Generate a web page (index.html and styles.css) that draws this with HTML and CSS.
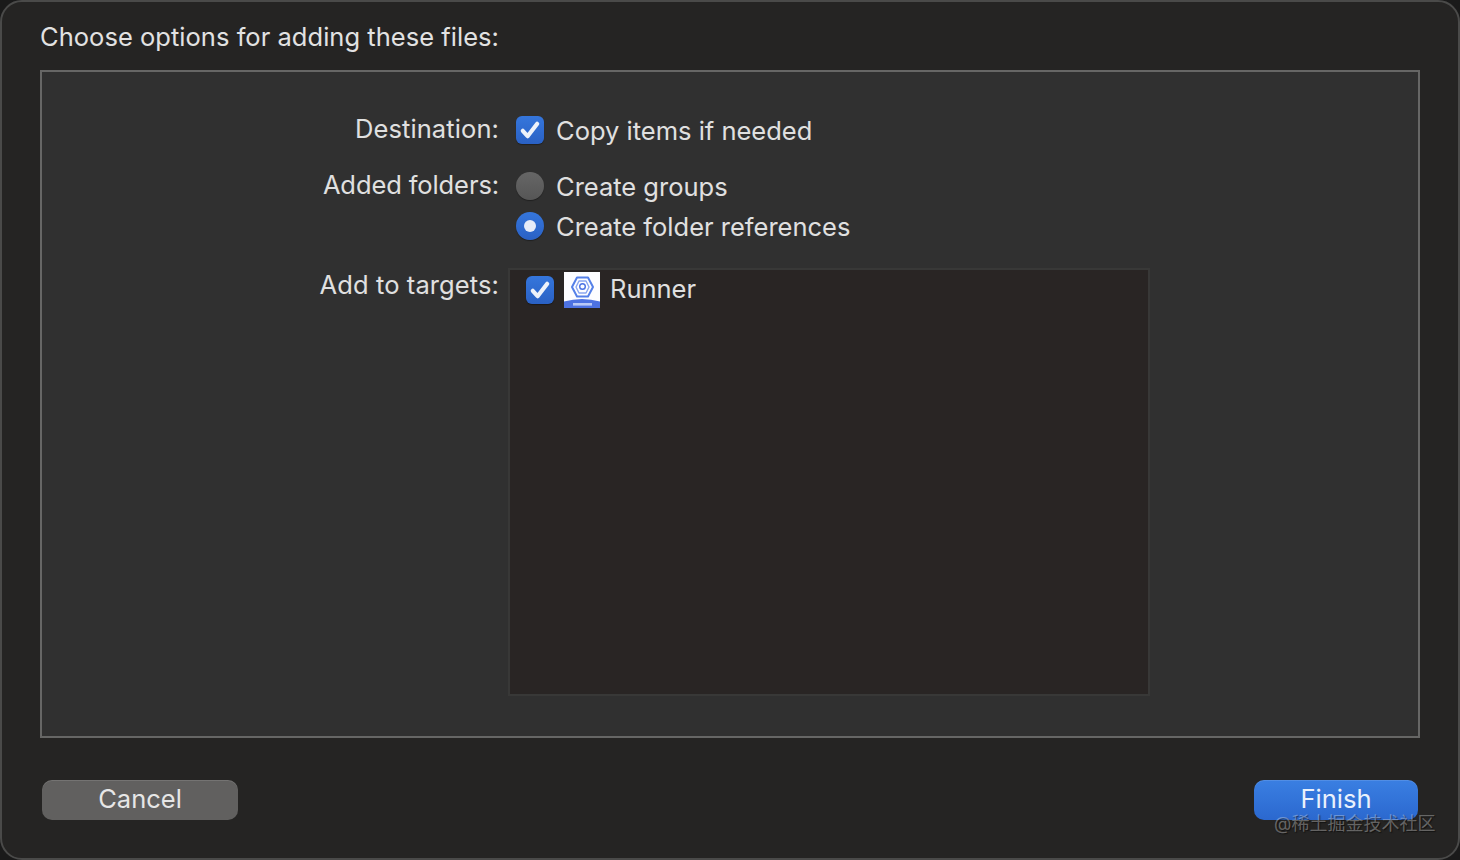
FILE: index.html
```html
<!DOCTYPE html>
<html lang="en">
<head>
<meta charset="utf-8">
<title>Choose options</title>
<link rel="stylesheet" href="styles.css">
</head>
<body>
<div class="sheet">
  <h1 class="title">Choose options for adding these files:</h1>
  <section class="panel">
    <div class="form">
      <div class="label">Destination:</div>
      <div class="option option-dest">
        <span class="check"><svg viewBox="0 0 28 28" class="tick"><path d="M6.8 14.8 L11.6 20.2 L21.2 7.8" /></svg></span>
        <span class="text">Copy items if needed</span>
      </div>
      <div class="label label-folders">Added folders:</div>
      <div class="radios">
        <div class="option">
          <span class="radio"></span>
          <span class="text">Create groups</span>
        </div>
        <div class="option">
          <span class="radio radio-on"><span class="dot"></span></span>
          <span class="text">Create folder references</span>
        </div>
      </div>
      <div class="label">Add to targets:</div>
      <div class="targets">
        <div class="target">
          <span class="check"><svg viewBox="0 0 28 28" class="tick"><path d="M6.8 14.8 L11.6 20.2 L21.2 7.8" /></svg></span>
          <svg class="appicon" viewBox="0 0 36 36">
            <rect width="36" height="36" fill="#fdfdff"/>
            <path d="M0 29.5 Q18 24.5 36 29.5 V36 H0 Z" fill="#4d72e2"/>
            <path d="M13 5.5 H24 L29 15 L24 24.5 H13 L8 15 Z" fill="none" stroke="#5580e8" stroke-width="2" stroke-linejoin="round"/>
            <path d="M15 9 H22 L25 15 L22 21 H15 L12 15 Z" fill="none" stroke="#8aa6f0" stroke-width="1.4" stroke-linejoin="round"/>
            <circle cx="18.5" cy="14.5" r="2.8" fill="none" stroke="#4a72e4" stroke-width="1.4"/>
            <rect x="9" y="31" width="19" height="2.6" fill="#b9c9f6"/>
          </svg>
          <span class="text">Runner</span>
        </div>
      </div>
    </div>
  </section>
  <footer class="actions">
    <button class="btn btn-cancel">Cancel</button>
    <button class="btn btn-finish">Finish</button>
  </footer>
  <div class="watermark">@稀土掘金技术社区</div>
</div>
</body>
</html>
```

FILE: styles.css
```css
* { box-sizing: border-box; }
html, body { margin: 0; padding: 0; background: #1a1a1a; }
body { width: 1460px; height: 860px; overflow: hidden; font-family: Inter, "Noto Sans CJK SC", sans-serif; }
.sheet {
  position: relative;
  width: 1460px;
  height: 860px;
  background: #252423;
  border: 2px solid #4a4a49;
  border-radius: 22px;
  padding: 0 38px;
  color: #e0e0e0;
}
.title {
  margin: 0;
  height: 68px;
  padding-top: 19px;
  font-size: 25.5px;
  letter-spacing: .03px;
  line-height: 32px;
  font-weight: 400;
  color: #e2e2e2;
}
.panel {
  width: 1380px;
  height: 668px;
  background: #303030;
  border: 2px solid #666665;
  padding-top: 40px;
}
.form {
  display: grid;
  grid-template-columns: 458px 642px;
  column-gap: 8px;
  font-size: 25.5px;
}
.label { text-align: right; line-height: 32px; color: #e0e0e0; padding: 1px 1px 0 0; letter-spacing: .1px; }
.label-folders { padding-top: 3px; letter-spacing: -.1px; }
.option { display: flex; align-items: center; gap: 12px; height: 40px; padding-left: 8px; }
.text { line-height: 32px; color: #e0e0e0; padding-top: 2px; }
.option-dest { height: 36px; margin-bottom: 18px; }
.radios { display: flex; flex-direction: column; margin-bottom: 22px; }
.check {
  width: 28px;
  height: 28px;
  flex: none;
  border-radius: 6px;
  background: linear-gradient(#3576dc, #2a61c4);
  box-shadow: 0 1px 1px rgba(0,0,0,.35);
  display: block;
}
.tick { display: block; width: 28px; height: 28px; fill: none; stroke: #eef2fa; stroke-width: 4.2; stroke-linecap: round; stroke-linejoin: round; }
.radio {
  width: 28px;
  height: 28px;
  flex: none;
  border-radius: 50%;
  background: linear-gradient(#666, #565656);
  box-shadow: 0 1px 1px rgba(0,0,0,.35);
  display: flex;
  align-items: center;
  justify-content: center;
}
.radio-on { background: linear-gradient(#3576dc, #2a61c4); }
.dot { width: 12px; height: 12px; border-radius: 50%; background: #e6ecf8; }
.targets {
  width: 642px;
  height: 428px;
  background: #292524;
  border: 2px solid #383837;
  padding: 2px 0 0 16px;
}
.target { display: flex; align-items: center; height: 36px; }
.target .check { margin-right: 10px; }
.target .text { padding-top: 0; padding-bottom: 2px; }
.appicon { width: 36px; height: 36px; margin-right: 10px; flex: none; }
.actions {
  display: flex;
  justify-content: space-between;
  padding: 42px 2px 0 2px;
}
.btn {
  height: 40px;
  border: 0;
  border-radius: 10px;
  font-family: inherit;
  font-size: 25.5px;
  line-height: 32px;
  padding: 0 0 2px;
  color: #e6e6e6;
  box-shadow: inset 0 1px 0 rgba(255,255,255,.12);
}
.btn-cancel { width: 196px; background: #61605f; }
.btn-finish { width: 164px; background: linear-gradient(#3a7fe2, #2b68cf); color: #eaf1fc; }
.watermark {
  position: absolute;
  left: 1272px;
  top: 810px;
  font-size: 18px;
  line-height: 24px;
  color: rgba(255,255,255,.32);
  text-shadow: 1px 1px 1px rgba(0,0,0,.5);
  white-space: nowrap;
}
```
